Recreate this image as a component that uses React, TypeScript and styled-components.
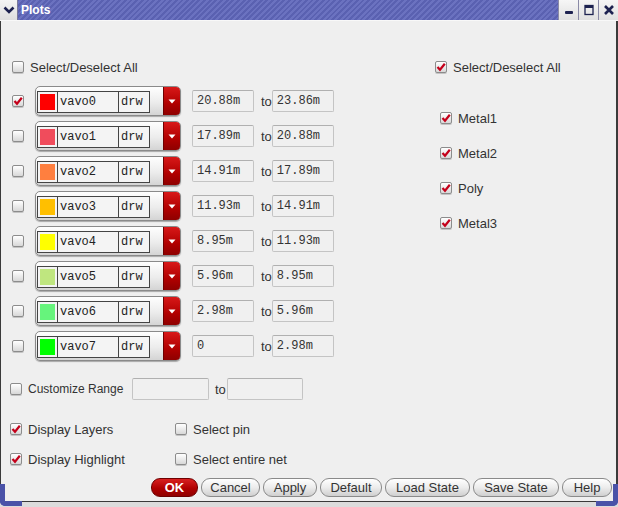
import styled, { createGlobalStyle } from 'styled-components';

const GlobalStyle = createGlobalStyle`
  html, body {
    margin: 0;
    padding: 0;
    background: #efefef;
  }
  body {
    font-family: 'Liberation Sans', Arial, sans-serif;
  }
`;

const Window = styled.div`
  position: relative;
  display: flex;
  flex-direction: column;
  width: 618px;
  height: 507px;
  background: #efefef;
  overflow: hidden;
  box-sizing: border-box;
`;

const TitleBar = styled.div`
  display: flex;
  align-items: stretch;
  height: 20px;
  border-bottom: 1px solid #f8f8f8;
  background: repeating-linear-gradient(135deg, #5a61b1 0 2px, #6b72c0 2px 4px);
`;

const MenuButton = styled.div`
  width: 17px;
  display: flex;
  align-items: center;
  justify-content: center;
  background: linear-gradient(#f4f4f4, #dedede);
  border-right: 1px solid #7a7a9a;
`;

const Title = styled.div`
  flex: 1;
  padding-left: 3px;
  display: flex;
  align-items: center;
  color: #fff;
  font-weight: bold;
  font-size: 12px;
`;

const WinButton = styled.div`
  width: 19px;
  display: flex;
  align-items: center;
  justify-content: center;
  background: linear-gradient(#f6f6f6, #e0e0e0);
  border-left: 1px solid #8a8aa6;
`;

const Body = styled.div`
  flex: 1;
  display: flex;
  flex-direction: column;
  border-left: 1px solid #3a3a3a;
  border-right: 2px solid #3a3a3a;
  color: #333;
  font-size: 13px;
`;

const BottomFrame = styled.div`
  height: 5px;
  border-top: 1px solid #3a3a3a;
  background: #dcdcdc;
`;

const Corner = styled.div<{ $side: 'left' | 'right' }>`
  position: absolute;
  bottom: 1px;
  ${({ $side }) => ($side === 'left' ? 'left: 0;' : 'right: 0;')}
  width: 22px;
  height: 22px;
  box-sizing: border-box;
  border-bottom: 5px solid #4a52a8;
  ${({ $side }) =>
    $side === 'left'
      ? 'border-left: 5px solid #4a52a8; border-bottom-left-radius: 5px;'
      : 'border-right: 5px solid #4a52a8; border-bottom-right-radius: 5px;'}
`;

const TopSection = styled.div`
  display: flex;
  padding-top: 38px;
`;

const LeftCol = styled.div`
  width: 423px;
  padding-left: 11px;
  display: flex;
  flex-direction: column;
`;

const RightCol = styled.div`
  flex: 1;
  display: flex;
  flex-direction: column;
`;

const CheckRow = styled.label<{ $indent?: number; $gapTop?: number; $width?: number; $size?: number }>`
  display: flex;
  align-items: center;
  gap: 6px;
  height: 16px;
  margin-left: ${({ $indent }) => $indent ?? 0}px;
  margin-top: ${({ $gapTop }) => $gapTop ?? 0}px;
  ${({ $width }) => ($width ? `width: ${$width}px; flex: none;` : '')}
  font-size: ${({ $size }) => $size ?? 13}px;
  white-space: nowrap;
`;

const Box = styled.span`
  display: inline-flex;
  align-items: center;
  justify-content: center;
  width: 12px;
  height: 12px;
  box-sizing: border-box;
  border: 1px solid #8c8c8c;
  border-radius: 2px;
  background: linear-gradient(#ffffff, #d8d8d8);
  box-shadow: 0 1px 0 #c4c4c4;
  flex: none;
`;

const LayerList = styled.div`
  display: flex;
  flex-direction: column;
  gap: 5px;
  margin-top: 11px;
`;

const LayerRow = styled.div`
  display: flex;
  align-items: center;
  height: 30px;
`;

const Combo = styled.div`
  display: flex;
  align-items: center;
  width: 146px;
  height: 30px;
  margin-left: 11px;
  box-sizing: border-box;
  border: 1px solid #8a8a8a;
  border-radius: 5px;
  background: linear-gradient(#fefefe, #ececec 55%, #d4d4d4);
  box-shadow: 0 1px 1px #a8a8a8;
  overflow: hidden;
`;

const Frame = styled.div`
  display: flex;
  height: 22px;
  margin-left: 1px;
  margin-top: 2px;
  box-sizing: border-box;
  border: 1px solid #444;
  background: #f4f4f4;
  font-family: 'Liberation Mono', 'Courier New', monospace;
  font-size: 12px;
  color: #222;
`;

const SwatchCell = styled.div`
  width: 20px;
  box-sizing: border-box;
  border-right: 1px solid #444;
  padding: 2px;
`;

const Swatch = styled.div<{ $color: string }>`
  width: 100%;
  height: 100%;
  background: ${({ $color }) => $color};
`;

const TextCell = styled.div<{ $w: number; $last?: boolean }>`
  width: ${({ $w }) => $w}px;
  box-sizing: border-box;
  padding-left: 2px;
  display: flex;
  align-items: center;
  ${({ $last }) => ($last ? '' : 'border-right: 1px solid #444;')}
`;

const DropButton = styled.div`
  margin-left: auto;
  align-self: stretch;
  width: 16px;
  display: flex;
  align-items: center;
  justify-content: center;
  background: linear-gradient(#d81818, #b00000 60%, #8e0000);
  border-left: 1px solid #6e0000;
`;

const RangeInput = styled.div<{ $w: number; $ml?: number }>`
  width: ${({ $w }) => $w}px;
  height: 22px;
  margin-left: ${({ $ml }) => $ml ?? 0}px;
  box-sizing: border-box;
  border: 1px solid #c4c4c4;
  border-top-color: #b0b0b0;
  border-radius: 2px;
  background: #f0f0f0;
  padding-left: 4px;
  display: flex;
  align-items: center;
  font-family: 'Liberation Mono', 'Courier New', monospace;
  font-size: 12px;
  color: #333;
`;

const ToLabel = styled.span<{ $l: number; $r: number }>`
  margin-left: ${({ $l }) => $l}px;
  margin-right: ${({ $r }) => $r}px;
  font-size: 13px;
`;

const CustomRow = styled.div`
  display: flex;
  align-items: center;
  height: 22px;
  margin-top: 17px;
  padding-left: 9px;
`;

const OptionsGrid = styled.div`
  display: grid;
  grid-template-columns: 165px auto;
  row-gap: 14px;
  margin-top: 21px;
  padding-left: 9px;
`;

const ButtonRow = styled.div`
  display: flex;
  justify-content: flex-end;
  gap: 3px;
  margin-top: 11px;
  padding-right: 4px;
`;

const Button = styled.div<{ $w: number; $primary?: boolean }>`
  width: ${({ $w }) => $w}px;
  height: 19px;
  box-sizing: border-box;
  border: 1px solid ${({ $primary }) => ($primary ? '#6e0000' : '#8a8a8a')};
  border-radius: 9px;
  display: flex;
  align-items: center;
  justify-content: center;
  font-size: 13px;
  color: ${({ $primary }) => ($primary ? '#fff' : '#333')};
  font-weight: ${({ $primary }) => ($primary ? 'bold' : 'normal')};
  background: ${({ $primary }) =>
    $primary
      ? 'linear-gradient(#d82020, #b00000 55%, #900000)'
      : 'linear-gradient(#ffffff, #ececec 50%, #cfcfcf)'};
`;

const CheckMark = () => (
  <svg width="10" height="10" viewBox="0 0 10 10">
    <path d="M1.5 5 L4 7.8 L8.8 1.8" fill="none" stroke="#c4001a" strokeWidth="2.2" />
  </svg>
);

const Check = ({ checked }: { checked?: boolean }) => <Box>{checked && <CheckMark />}</Box>;

const layers = [
  { name: 'vavo0', color: '#ff0000', from: '20.88m', to: '23.86m', on: true },
  { name: 'vavo1', color: '#f04c5c', from: '17.89m', to: '20.88m' },
  { name: 'vavo2', color: '#ff7f3f', from: '14.91m', to: '17.89m' },
  { name: 'vavo3', color: '#ffbf00', from: '11.93m', to: '14.91m' },
  { name: 'vavo4', color: '#ffff00', from: '8.95m', to: '11.93m' },
  { name: 'vavo5', color: '#bfe67f', from: '5.96m', to: '8.95m' },
  { name: 'vavo6', color: '#66f47c', from: '2.98m', to: '5.96m' },
  { name: 'vavo7', color: '#00ff00', from: '0', to: '2.98m' },
];

const metals = ['Metal1', 'Metal2', 'Poly', 'Metal3'];

const buttons = [
  { label: 'OK', w: 47, primary: true },
  { label: 'Cancel', w: 59 },
  { label: 'Apply', w: 54 },
  { label: 'Default', w: 62 },
  { label: 'Load State', w: 85 },
  { label: 'Save State', w: 86 },
  { label: 'Help', w: 50 },
];

export default function App() {
  return (
    <>
      <GlobalStyle />
      <Window>
        <TitleBar>
          <MenuButton>
            <svg width="12" height="10" viewBox="0 0 12 10">
              <path d="M1.5 2.5 L6 7 L10.5 2.5" fill="none" stroke="#1d2250" strokeWidth="2.6" />
            </svg>
          </MenuButton>
          <Title>Plots</Title>
          <WinButton>
            <svg width="12" height="12" viewBox="0 0 12 12">
              <rect x="2" y="7" width="8" height="3" rx="1" fill="#1d2250" />
            </svg>
          </WinButton>
          <WinButton>
            <svg width="12" height="12" viewBox="0 0 12 12">
              <rect x="2" y="1.5" width="8" height="9" fill="none" stroke="#1d2250" strokeWidth="1.3" />
              <rect x="2" y="1.5" width="8" height="2.5" fill="#1d2250" />
            </svg>
          </WinButton>
          <WinButton>
            <svg width="12" height="12" viewBox="0 0 12 12">
              <path d="M2 2 L10 10 M10 2 L2 10" stroke="#1d2250" strokeWidth="2.6" />
            </svg>
          </WinButton>
        </TitleBar>
        <Body>
          <TopSection>
            <LeftCol>
              <CheckRow>
                <Check />
                Select/Deselect All
              </CheckRow>
              <LayerList>
                {layers.map((l) => (
                  <LayerRow key={l.name}>
                    <Check checked={l.on} />
                    <Combo>
                      <Frame>
                        <SwatchCell>
                          <Swatch $color={l.color} />
                        </SwatchCell>
                        <TextCell $w={61}>{l.name}</TextCell>
                        <TextCell $w={30} $last>
                          drw
                        </TextCell>
                      </Frame>
                      <DropButton>
                        <svg width="8" height="5" viewBox="0 0 8 5">
                          <path d="M0.5 0.5 L7.5 0.5 L4 4.5 Z" fill="#fff" />
                        </svg>
                      </DropButton>
                    </Combo>
                    <RangeInput $w={62} $ml={11}>
                      {l.from}
                    </RangeInput>
                    <ToLabel $l={7} $r={0}>
                      to
                    </ToLabel>
                    <RangeInput $w={62}>{l.to}</RangeInput>
                  </LayerRow>
                ))}
              </LayerList>
            </LeftCol>
            <RightCol>
              <CheckRow>
                <Check checked />
                Select/Deselect All
              </CheckRow>
              {metals.map((m, i) => (
                <CheckRow key={m} $indent={5} $gapTop={i === 0 ? 35 : 19}>
                  <Check checked />
                  {m}
                </CheckRow>
              ))}
            </RightCol>
          </TopSection>
          <CustomRow>
            <CheckRow $width={112} $size={12}>
              <Check />
              Customize Range
            </CheckRow>
            <RangeInput $w={77} $ml={10} />
            <ToLabel $l={6} $r={1}>
              to
            </ToLabel>
            <RangeInput $w={76} />
          </CustomRow>
          <OptionsGrid>
            <CheckRow>
              <Check checked />
              Display Layers
            </CheckRow>
            <CheckRow>
              <Check />
              Select pin
            </CheckRow>
            <CheckRow>
              <Check checked />
              Display Highlight
            </CheckRow>
            <CheckRow>
              <Check />
              Select entire net
            </CheckRow>
          </OptionsGrid>
          <ButtonRow>
            {buttons.map((b) => (
              <Button key={b.label} $w={b.w} $primary={b.primary}>
                {b.label}
              </Button>
            ))}
          </ButtonRow>
        </Body>
        <BottomFrame />
        <Corner $side="left" />
        <Corner $side="right" />
      </Window>
    </>
  );
}
